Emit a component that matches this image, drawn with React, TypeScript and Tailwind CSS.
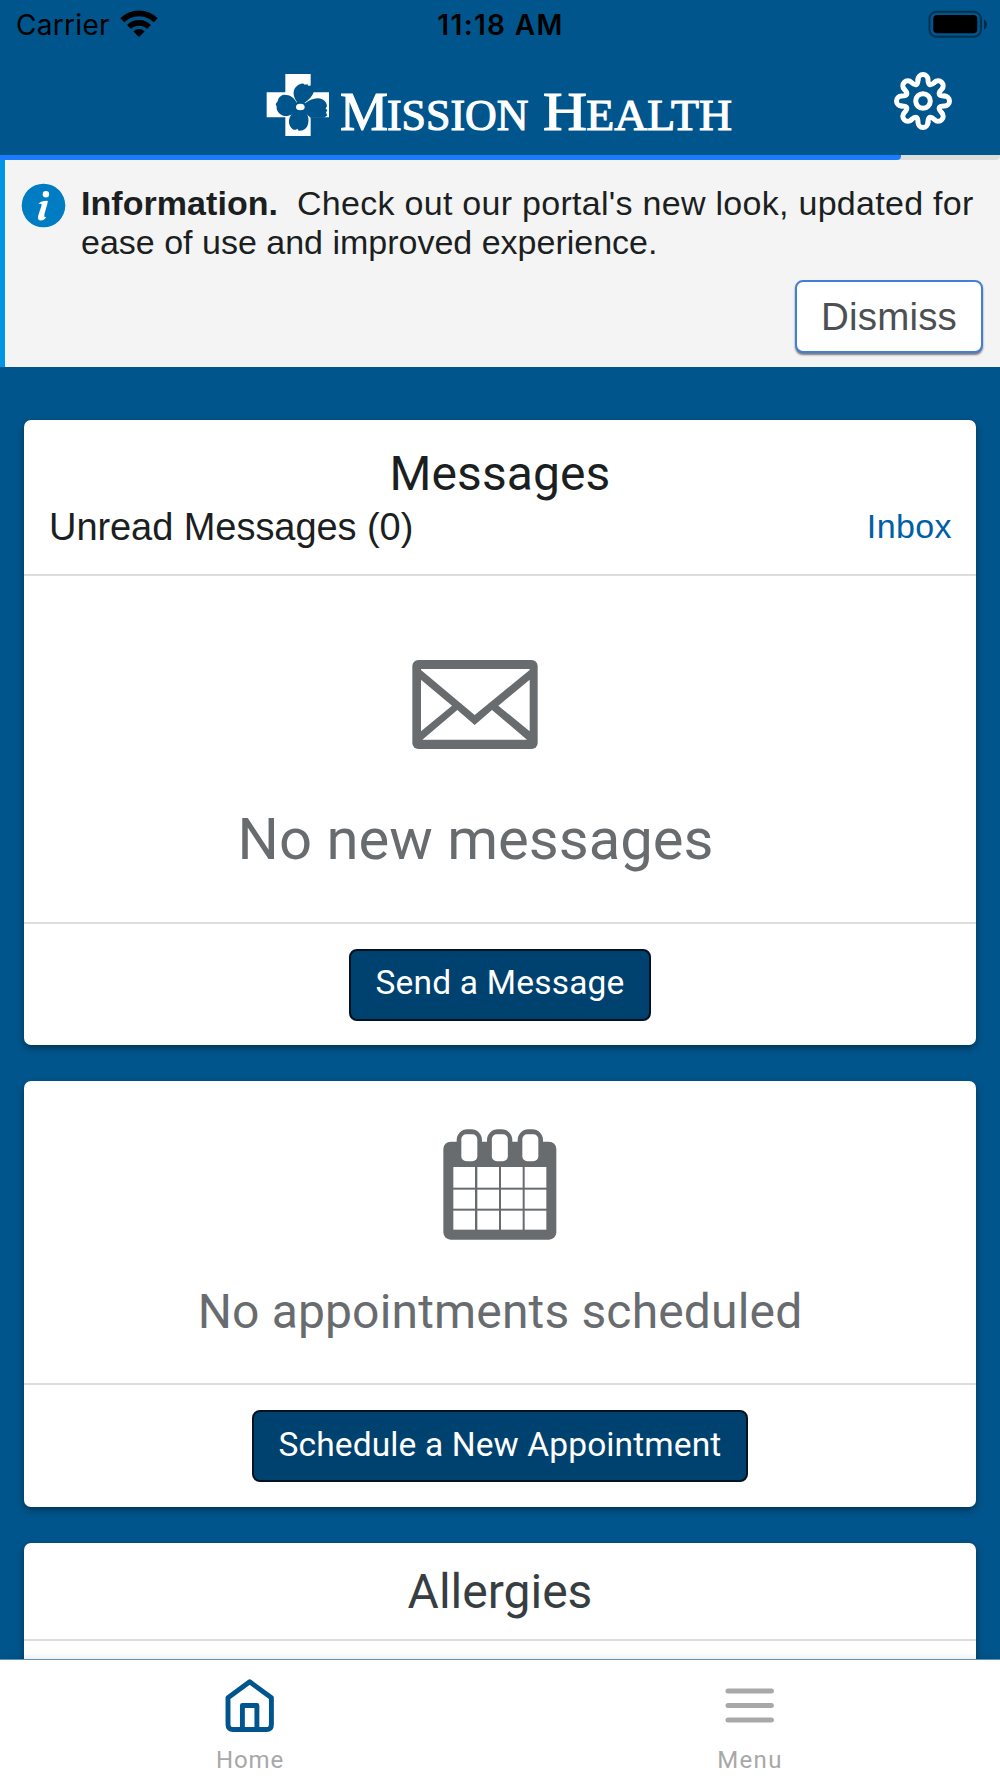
import React from "react";

const WifiIcon: React.FC = () => (
  <svg width="38" height="28" viewBox="-19 -27 38 28" fill="none" stroke="#000" strokeWidth="5.6">
    <path d="M-16.7 -16.7A23.6 23.6 0 0 1 16.7 -16.7" />
    <path d="M-10 -10A14.2 14.2 0 0 1 10 -10" />
    <path d="M0 0L-5.6 -5.6A8 8 0 0 1 5.6 -5.6Z" fill="#000" stroke="none" />
  </svg>
);

const BatteryIcon: React.FC = () => (
  <svg width="60" height="28" viewBox="0 0 60 28" fill="none">
    <rect x="1.5" y="1.8" width="51.4" height="25" rx="7" stroke="#000" strokeOpacity="0.42" strokeWidth="2" />
    <rect x="5.3" y="5" width="44" height="18.2" rx="4" fill="#000" />
    <path d="M56 9.5C60 11.5 60 17.5 56 19.5Z" fill="#000" fillOpacity="0.5" />
  </svg>
);

const Logo: React.FC = () => (
  <svg width="466" height="64" viewBox="48 39 1398 192" fill="#fff" className="overflow-visible">
    <path d="M106 42H182V97H237V172H182V228H106V172H50V97H106Z" />
    {/* dogwood flower */}
    <g fill="#00558c">
      <path d="M148 134C130 118 124 92 140 79C150 70 160 68 164 74L172 73L176 78L184 76L191 96C186 112 172 124 155 134Z" />
      <path d="M144 138C136 112 120 104 102 104C90 106 84 116 83 124L77 132L80 140L80 146C84 162 100 170 112 168C126 166 138 158 144 148Z" />
      <path d="M144 148C120 160 112 182 120 198C126 208 132 211 138 209L142 206L146 212C160 214 172 204 174 192C178 176 174 160 158 148Z" />
      <path d="M156 138C172 124 184 116 204 115C220 116 230 126 231 138L227 146L232 150L228 158L232 166L222 173L182 173C170 164 160 152 156 146Z" />
      <circle cx="151" cy="141" r="18" />
    </g>
    <ellipse cx="151" cy="141" rx="13" ry="10" />
    <g fontFamily="'Liberation Serif', serif" stroke="#fff" strokeWidth="3.5">
      <text x="270" y="209.5" fontSize="162">M</text>
      <text x="411" y="209.5" fontSize="131" textLength="424" lengthAdjust="spacingAndGlyphs">ISSION</text>
      <text x="879" y="209.5" fontSize="162" textLength="132" lengthAdjust="spacingAndGlyphs">H</text>
      <text x="1009" y="209.5" fontSize="131" textLength="437" lengthAdjust="spacingAndGlyphs">EALTH</text>
    </g>
  </svg>
);

const GearIcon: React.FC = () => (
  <svg width="60" height="60" viewBox="-30 -30 60 60" fill="none" stroke="#fff" strokeWidth="5" strokeLinecap="round">
    {[0, 45, 90, 135, 180, 225, 270, 315].map((angle) => (
      <path
        key={angle}
        transform={`rotate(${angle})`}
        d="M-5 -21.5A5 5 0 0 1 5 -21.5C5 -15.5 7.4 -14.5 11.67 -18.74"
      />
    ))}
    <circle r="7.3" />
  </svg>
);

const InfoIcon: React.FC = () => (
  <svg width="44" height="44" viewBox="-22.5 -22.5 44 44" className="shrink-0 overflow-visible">
    <circle r="21.8" fill="#007cc3" />
    <circle cx="2.4" cy="-11.2" r="3.2" fill="#fff" />
    <path
      d="M-5.3 -1.6C-3 -4 1 -5 4.3 -4.6C4.3 -1 1 6.5 .8 10.2C.7 12 1.8 11.8 2.9 11.2C1.6 14 -.8 15 -2.6 15C-5 15 -5.8 13.6 -5.4 11C-5 8.4 -2.4 2 -1.9 -.6C-1.8 -1.9 -3.6 -1.6 -5.3 -1.6Z"
      fill="#fff"
    />
  </svg>
);

const EnvelopeIcon: React.FC = () => (
  <svg width="126" height="89" viewBox="96 91 378 267">
    <rect x="97" y="91" width="376" height="267" rx="18" fill="#686c6f" />
    <g fill="#fff">
      <path d="M123 118H449V121L284 256L123 121Z" />
      <path d="M123 150L216 228L123 305Z" />
      <path d="M449 150L355 228L449 305Z" />
      <path d="M232 241L284 286L336 241L441 330H127Z" />
    </g>
  </svg>
);

const CalendarIcon: React.FC = () => (
  <svg width="114" height="111" viewBox="128 85 342 333">
    <g fill="#686c6f">
      <rect x="129" y="123" width="339" height="294" rx="22" />
      <rect x="169" y="86" width="76" height="100" rx="32" />
      <rect x="260" y="86" width="76" height="100" rx="32" />
      <rect x="352" y="86" width="76" height="100" rx="32" />
    </g>
    <g fill="#fff">
      {[183, 274.5, 366].map((x) => (
        <rect key={x} x={x} y="101" width="48" height="81" rx="15" />
      ))}
      {[159, 231, 302, 373].map((x) =>
        [199, 267, 330].map((y) => (
          <rect key={`${x}-${y}`} x={x} y={y} width="65" height={y === 199 ? 62 : 57} />
        ))
      )}
    </g>
  </svg>
);

const HomeIcon: React.FC = () => (
  <svg width="50" height="54" viewBox="0 0 50 54" fill="none" stroke="#00558c" strokeWidth="4.9" strokeLinejoin="round">
    <path d="M24.7 2.8L46.4 18.8V45.5Q46.4 50.5 41.4 50.5H8Q3 50.5 3 45.5V18.8Z" />
    <path d="M17.4 50.5V26.5H31.9V50.5" />
  </svg>
);

const MenuIcon: React.FC = () => (
  <svg width="50" height="54" viewBox="0 0 50 54" stroke="#a8a8a8" strokeWidth="5" strokeLinecap="round">
    <path d="M3 12H46.4M3 26.5H46.4M3 41H46.4" />
  </svg>
);

const CARD = "bg-white rounded-[7px] shadow-[0_3px_7px_rgba(0,0,0,0.4)]";
const ACTION =
  "h-[72px] border-2 border-[#00111f] rounded-[8px] bg-[#00426f] text-white text-[33.5px] leading-[64px] whitespace-nowrap";

const App: React.FC = () => {
  return (
    <div className="w-[1000px] h-[1778px] flex flex-col overflow-hidden bg-[#00558c] font-[Roboto,sans-serif]">
      {/* Status bar */}
      <div className="h-[50px] grid grid-cols-3 shrink-0 text-[28px] leading-[51px] text-black font-[Inter,sans-serif]">
        <div className="flex pl-4">
          <span className="w-[104px] tracking-[0.3px]">Carrier</span>
          <div className="pt-[10px]">
            <WifiIcon />
          </div>
        </div>
        <div className="pl-px text-center font-semibold text-[28px] tracking-[1.35px]">11:18 AM</div>
        <div className="flex justify-end pt-[10px] pr-[12px]">
          <BatteryIcon />
        </div>
      </div>

      {/* Header */}
      <header className="h-[105px] shrink-0 flex justify-between items-start pl-[266px] pr-[47px]">
        <div className="pt-[23px]">
          <Logo />
        </div>
        <button className="pt-[21px]">
          <GearIcon />
        </button>
      </header>

      {/* Alert */}
      <section className="relative h-[212px] shrink-0 flex flex-col border-l-[5px] border-[#0095e5] bg-[#f4f4f4] pr-[17px] font-['Liberation_Sans',sans-serif]">
        <div className="absolute top-0 -left-[5px] w-[1000px] h-[4.5px] bg-[#dcdcdc] rounded-br-[4px]">
          <div className="w-[901px] h-full bg-[#1a7bff] rounded-br-[4px]" />
        </div>
        <div className="flex pl-4 pt-7">
          <InfoIcon />
          <p className="pl-4 pt-px text-[34px] leading-[39px] text-[#1b1f22] whitespace-nowrap">
            <strong className="tracking-[0.05px]">Information.</strong>
            <span className="ml-[19px] tracking-[0.28px]">Check out our portal's new look, updated for</span>
            <br />
            <span>ease of use and improved experience.</span>
          </p>
        </div>
        <button className="self-end mt-[18px] w-[188px] h-[73px] pt-px border-2 border-[#427fd6] rounded-[8px] bg-white shadow-[0_2px_2px_rgba(0,0,0,0.5)] text-[38.5px] leading-[64px] tracking-[0.2px] text-[#4c5053]">
          Dismiss
        </button>
      </section>

      <main className="flex-1 min-h-0 overflow-hidden flex flex-col gap-9 px-6 pt-[52.5px]">
        {/* Messages */}
        <section className={`${CARD} h-[625.5px] shrink-0 flex flex-col`}>
          <div className="h-[154.5px] pt-[26.5px] text-[#1b1f22]">
            <h2 className="text-center text-[48px] leading-[56px] tracking-[0.1px]">Messages</h2>
            <div className="mt-[3px] pl-[25px] pr-6 flex justify-between font-['Liberation_Sans',sans-serif]">
              <span className="text-[38px] leading-[44px] tracking-[-0.06px]">Unread Messages (0)</span>
              <a href="#" className="text-[34px] leading-[42px] tracking-[0.4px] text-[#0060a6]">
                Inbox
              </a>
            </div>
          </div>
          <div className="h-[348px] pt-[84px] pr-[50px] flex flex-col items-center border-t-[2px] border-[#dcdddd]">
            <EnvelopeIcon />
            <p className="mt-14 pl-px text-[58px] leading-[68px] text-[#686c6f]">No new messages</p>
          </div>
          <div className="flex-1 pt-[25px] flex justify-center items-start border-t-[2px] border-[#dcdddd]">
            <button className={`${ACTION} w-[302px] pb-1 tracking-[0.2px]`}>Send a Message</button>
          </div>
        </section>

        {/* Appointments */}
        <section className={`${CARD} h-[426px] shrink-0 flex flex-col`}>
          <div className="h-[302px] pt-[47.5px] flex flex-col items-center">
            <CalendarIcon />
            <p className="mt-11 text-[48px] leading-[56px] tracking-[0.16px] text-[#686c6f]">
              No appointments scheduled
            </p>
          </div>
          <div className="flex-1 pt-[24.5px] flex justify-center items-start border-t-[2px] border-[#dcdddd]">
            <button className={`${ACTION} w-[496px] pb-[2px] tracking-[0.12px]`}>Schedule a New Appointment</button>
          </div>
        </section>

        {/* Allergies */}
        <section className={`${CARD} h-[300px] shrink-0`}>
          <h2 className="h-[98px] pt-[20.5px] text-center text-[48px] leading-[56px] text-[#373e41] border-b-[2px] border-[#dcdddd]">
            Allergies
          </h2>
        </section>
      </main>

      {/* Tab bar */}
      <nav className="h-[119px] shrink-0 flex bg-white border-t border-[#5d95bb] shadow-[0_0_8px_rgba(0,0,0,0.12)] text-[24px] leading-7 text-[#a8a8a8]">
        <a href="#" className="flex-1 flex flex-col items-center pt-[19px]">
          <HomeIcon />
          <span className="mt-[13px] tracking-[0.9px]">Home</span>
        </a>
        <a href="#" className="flex-1 flex flex-col items-center pt-[19px]">
          <MenuIcon />
          <span className="mt-[13px] tracking-[1.3px]">Menu</span>
        </a>
      </nav>
    </div>
  );
};

export default App;
